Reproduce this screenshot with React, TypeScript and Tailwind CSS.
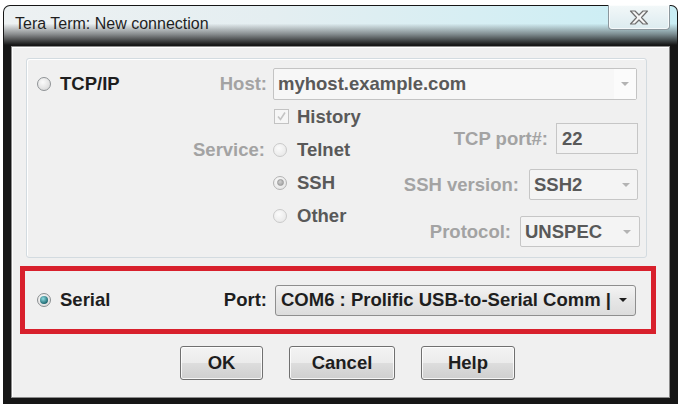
import React from "react";

type RState = "off" | "disabled" | "disabledChecked" | "checked";

function Radio({ state }: { state: RState }) {
  if (state === "off") {
    return (
      <div className="w-[14px] h-[14px] shrink-0 rounded-full border border-[#8f9396] bg-[radial-gradient(circle_at_40%_35%,#fbfbfb,#d2d2d2)]" />
    );
  }
  if (state === "disabled") {
    return (
      <div className="w-[14px] h-[14px] shrink-0 rounded-full border border-[#cacaca] bg-[radial-gradient(circle_at_40%_35%,#fbfbfb,#e4e4e4)]" />
    );
  }
  if (state === "disabledChecked") {
    return (
      <div className="w-[14px] h-[14px] shrink-0 rounded-full border border-[#b3b3b3] bg-[radial-gradient(circle_at_40%_35%,#fbfbfb,#e0e0e0)] flex items-center justify-center">
        <div className="w-[7px] h-[7px] rounded-full bg-[radial-gradient(circle_at_40%_35%,#d0d0d0,#9a9a9a)] border border-[#9c9c9c]" />
      </div>
    );
  }
  return (
    <div className="w-[14px] h-[14px] shrink-0 rounded-full border border-[#8a8e90] bg-[radial-gradient(circle_at_40%_35%,#fbfbfb,#d6d6d6)] flex items-center justify-center">
      <div className="w-[8px] h-[8px] rounded-full bg-[radial-gradient(circle_at_40%_35%,#8fdde2,#1f6a72_70%,#174a50)]" />
    </div>
  );
}

function GrayArrow() {
  return (
    <div className="w-0 h-0 border-l-[4px] border-r-[4px] border-t-[4px] border-l-transparent border-r-transparent border-t-[#b3b3b3]" />
  );
}

function CloseX() {
  return (
    <svg width="20" height="15" viewBox="0 0 20 15">
      <polygon
        points="1.5,1 6,1 10,5 14,1 18.5,1 12.5,7.5 18.5,14 14,14 10,10 6,14 1.5,14 7.5,7.5"
        fill="#f6f6f6"
        stroke="#6f6f6f"
        strokeWidth="1.2"
        strokeLinejoin="round"
      />
    </svg>
  );
}

export default function App() {
  return (
    <div className="w-[689px] h-[411px] bg-white pt-[5px] pl-[3px] font-['Liberation_Sans',Arial,sans-serif] overflow-hidden">
      <div className="w-[675px] h-[399px] bg-[#161616] rounded-t-[7px] flex flex-col">
        {/* Title bar */}
        <div className="mx-[1px] mt-[1px] h-[39px] rounded-t-[6px] flex justify-between items-start bg-[linear-gradient(to_bottom,rgba(0,0,0,0)_45%,rgba(60,62,64,0.55)_72%,rgba(22,22,22,1)_100%),linear-gradient(to_right,#edf1f2_0%,#e4eef1_40%,#c9eef5_100%)]">
          <div className="pl-[11px] pt-[8px] text-[16px] leading-[20px] text-[#1f1f1f]">
            Tera Term: New connection
          </div>
          <div className="mr-[7px] -mt-[1px] w-[62px] h-[25px] rounded-b-[4px] border border-[#8c979d] border-t-0 bg-[linear-gradient(to_bottom,#f3f8f9,#dcebef)] flex items-center justify-center shadow-[inset_0_0_0_1px_rgba(255,255,255,0.7)]">
            <CloseX />
          </div>
        </div>

        {/* Content */}
        <div className="mx-[8px] mt-[1px] h-[352px] bg-[#f0f0f0] border border-[#8c8c8c] shadow-[inset_1px_1px_0_#ffffff] flex flex-col text-[18.5px] font-bold leading-[22px]">
          {/* Group box */}
          <div className="mt-[11px] ml-[14px] w-[621px] h-[200px] shrink-0 border border-[#d3dbe0] rounded-[3px] shadow-[inset_1px_1px_0_#ffffff]">
            <div className="mt-[9px] h-[32px] flex items-center">
              <div className="w-[240px] flex items-center justify-between">
                <div className="pl-[10px] flex items-center gap-[9px]">
                  <Radio state="off" />
                  <span className="text-[#1e1e1e]">TCP/IP</span>
                </div>
                <span className="text-[#a3a3a3]">Host:</span>
              </div>
              <div className="ml-[6px] w-[364px] h-[32px] border border-[#c4c4c4] rounded-[2px] bg-[#f7f7f7] flex items-center">
                <span className="pl-[4px] flex-1 text-[#595959]">myhost.example.com</span>
                <div className="w-[22px] h-full flex items-center justify-center bg-[#fbfbfb]">
                  <GrayArrow />
                </div>
              </div>
            </div>

            <div className="flex">
              <div className="w-[240px] flex flex-col pr-[2px]">
                <div className="h-[33px]" />
                <div className="h-[33px] flex items-center justify-end text-[#a3a3a3]">Service:</div>
              </div>
              <div className="ml-[6px] w-[100px] flex flex-col text-[#595959]">
                <div className="h-[33px] flex items-center gap-[8px] pl-[1px]">
                  <div className="w-[15px] h-[15px] shrink-0 border border-[#c3c3c3] bg-[#f6f6f6] flex items-center justify-center">
                    <svg width="11" height="11" viewBox="0 0 11 11">
                      <path d="M2 5.5 L4.5 8.5 L9 1.5" fill="none" stroke="#c4c4c4" strokeWidth="1.6" />
                    </svg>
                  </div>
                  <span>History</span>
                </div>
                <div className="h-[33px] flex items-center gap-[10px]">
                  <Radio state="disabled" />
                  <span>Telnet</span>
                </div>
                <div className="h-[33px] flex items-center gap-[10px]">
                  <Radio state="disabledChecked" />
                  <span>SSH</span>
                </div>
                <div className="h-[33px] flex items-center gap-[10px]">
                  <Radio state="disabled" />
                  <span>Other</span>
                </div>
              </div>
              <div className="flex-1 flex flex-col items-end pr-[8px]">
                <div className="mt-[23px] h-[31px] flex items-center gap-[8px]">
                  <span className="text-[#a3a3a3]">TCP port#:</span>
                  <div className="w-[82px] h-[31px] border border-[#c6c6c6] bg-[#f2f2f2] flex items-center pl-[5px] text-[#595959]">
                    22
                  </div>
                </div>
                <div className="mt-[15px] h-[31px] flex items-center gap-[10px]">
                  <span className="text-[#a3a3a3]">SSH version:</span>
                  <div className="w-[109px] h-[31px] border border-[#c6c6c6] rounded-[2px] bg-[#f4f4f4] flex items-center pl-[4px] pr-[7px] text-[#595959]">
                    <span className="flex-1">SSH2</span>
                    <GrayArrow />
                  </div>
                </div>
                <div className="mt-[16px] -mr-[2px] h-[31px] flex items-center gap-[9px]">
                  <span className="text-[#a3a3a3]">Protocol:</span>
                  <div className="w-[120px] h-[31px] border border-[#c6c6c6] rounded-[2px] bg-[#f4f4f4] flex items-center pl-[4px] pr-[8px] text-[#595959]">
                    <span className="flex-1">UNSPEC</span>
                    <GrayArrow />
                  </div>
                </div>
              </div>
            </div>
          </div>

          {/* Serial (red highlight) */}
          <div className="mt-[8px] ml-[8px] w-[636px] h-[68px] shrink-0 border-[5px] border-[#d8202c] flex items-center">
            <div className="w-[242px] flex items-center justify-between">
              <div className="pl-[12px] flex items-center gap-[9px]">
                <Radio state="checked" />
                <span className="text-[#1e1e1e]">Serial</span>
              </div>
              <span className="text-[#1e1e1e]">Port:</span>
            </div>
            <div className="ml-[8px] w-[361px] h-[31px] border border-[#8e8e8e] rounded-[3px] bg-[linear-gradient(to_bottom,#f4f4f4,#e6e6e6_50%,#dcdcdc)] flex items-center pl-[5px] pr-[8px] text-[#1e1e1e]">
              <span className="flex-1 whitespace-nowrap">COM6 : Prolific USB-to-Serial Comm |</span>
              <div className="w-0 h-0 border-l-[4px] border-r-[4px] border-t-[4px] border-l-transparent border-r-transparent border-t-[#1e1e1e]" />
            </div>
          </div>

          {/* Buttons */}
          <div className="mt-[12px] ml-[168px] flex gap-[26px] text-[#1e1e1e]">
            <div className="w-[83px] h-[34px] border border-[#707070] rounded-[3px] bg-[linear-gradient(to_bottom,#f3f3f3,#ebebeb_50%,#dddddd_51%,#cfcfcf)] shadow-[inset_0_0_0_1px_rgba(255,255,255,0.8)] flex items-center justify-center">
              OK
            </div>
            <div className="w-[106px] h-[34px] border border-[#707070] rounded-[3px] bg-[linear-gradient(to_bottom,#f3f3f3,#ebebeb_50%,#dddddd_51%,#cfcfcf)] shadow-[inset_0_0_0_1px_rgba(255,255,255,0.8)] flex items-center justify-center">
              Cancel
            </div>
            <div className="w-[94px] h-[34px] border border-[#707070] rounded-[3px] bg-[linear-gradient(to_bottom,#f3f3f3,#ebebeb_50%,#dddddd_51%,#cfcfcf)] shadow-[inset_0_0_0_1px_rgba(255,255,255,0.8)] flex items-center justify-center">
              Help
            </div>
          </div>
        </div>
      </div>
    </div>
  );
}
